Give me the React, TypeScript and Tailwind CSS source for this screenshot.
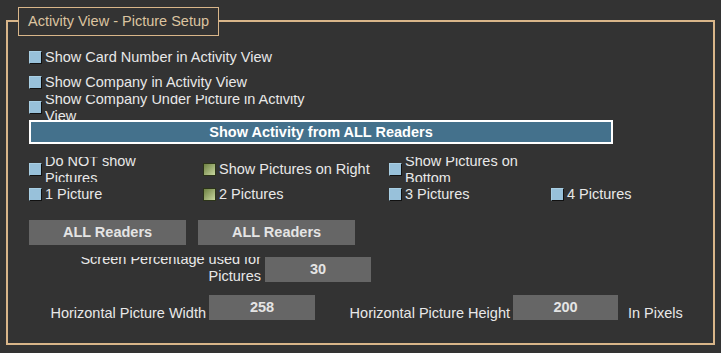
import React from "react";

const tan = "border-[#d9b68a]";

function Box({ green }: { green?: boolean }) {
  if (green) {
    return (
      <span className="block h-[13px] w-[13px] shrink-0 border border-[#2c3419] bg-linear-to-br from-[#6f8243] to-[#c8d79f]" />
    );
  }
  return (
    <span className="block h-[13px] w-[13px] shrink-0 border-t border-l border-r border-b border-t-[#a9cfe4] border-l-[#a9cfe4] border-r-[#111] border-b-[#111] bg-[#98c1da]" />
  );
}

function Check({ label, green }: { label: string; green?: boolean }) {
  return (
    <div className="flex h-full items-center gap-[3px]">
      <Box green={green} />
      <span className="whitespace-nowrap">{label}</span>
    </div>
  );
}

// two-line label that gets cut off by its box, like the WinForms one
function WrapCheck({ label, width, green }: { label: string; width: number; green?: boolean }) {
  return (
    <div className="flex h-full items-center gap-[3px]">
      <Box green={green} />
      <div className="h-[25px] overflow-hidden" style={{ width }}>
        <div className="mt-[-4px] leading-[17px]">{label}</div>
      </div>
    </div>
  );
}

function Field({ value, w }: { value: string; w: string }) {
  return (
    <div className={`flex h-[25px] items-center justify-center bg-[#666] pb-[1px] font-bold text-[#e4e4e4] ${w}`}>
      {value}
    </div>
  );
}

export default function App() {
  return (
    <div className="h-[353px] w-[721px] bg-[#333] pl-[6px] pt-[20px] font-['Liberation_Sans',Arial,sans-serif] text-[14.5px] leading-[17px] text-[#e8e8e8]">
      <div className={`relative h-[325px] w-[709px] border-2 ${tan}`}>
        <div className={`absolute left-[10px] top-[-15px] flex h-[29px] w-[201px] items-center border ${tan} bg-[#333] pl-[9px] text-[#dcc4a0]`}>
          Activity View - Picture Setup
        </div>

        <div className="flex flex-col pl-[21px]">
          <div className="mt-[26px] h-[18px]">
            <Check label="Show Card Number in Activity View" />
          </div>
          <div className="mt-[7px] h-[18px]">
            <Check label="Show Company in Activity View" />
          </div>
          <div className="mt-[4px] h-[25px]">
            <WrapCheck label="Show Company Under Picture in Activity View" width={270} />
          </div>

          <div className="flex h-[24px] w-[584px] items-center justify-center border-2 border-white bg-[#44718c] font-bold text-white">
            Show Activity from ALL Readers
          </div>

          <div className="mt-[13px] flex h-[25px]">
            <div className="w-[174px]">
              <WrapCheck label="Do NOT show Pictures" width={120} />
            </div>
            <div className="w-[186px]">
              <Check label="Show Pictures on Right" green />
            </div>
            <div className="w-[162px]">
              <WrapCheck label="Show Pictures on Bottom" width={130} />
            </div>
          </div>

          <div className="mt-[3px] flex h-[18px]">
            <div className="w-[174px]">
              <Check label="1 Picture" />
            </div>
            <div className="w-[186px]">
              <Check label="2 Pictures" green />
            </div>
            <div className="w-[162px]">
              <Check label="3 Pictures" />
            </div>
            <div>
              <Check label="4 Pictures" />
            </div>
          </div>

          <div className="mt-[17px] flex gap-[12px]">
            <div className="flex h-[25px] w-[157px] items-center justify-center bg-[#666] font-bold text-[#e4e4e4]">
              ALL Readers
            </div>
            <div className="flex h-[25px] w-[157px] items-center justify-center bg-[#666] font-bold text-[#e4e4e4]">
              ALL Readers
            </div>
          </div>

          <div className="mt-[12px] flex h-[25px] gap-[4px]">
            <div className="h-[25px] w-[232px] overflow-hidden text-right">
              <div className="ml-auto mt-[-6px] w-[200px]">Screen Percentage used for Pictures</div>
            </div>
            <Field value="30" w="w-[106px]" />
          </div>

          <div className="mt-[13px] flex h-[25px]">
            <div className="w-[177px] pt-[10px] text-right">Horizontal Picture Width</div>
            <div className="ml-[3px]">
              <Field value="258" w="w-[106px]" />
            </div>
            <div className="w-[195px] pt-[10px] text-right">Horizontal Picture Height</div>
            <div className="ml-[3px]">
              <Field value="200" w="w-[105px]" />
            </div>
            <div className="ml-[10px] pt-[10px]">In Pixels</div>
          </div>
        </div>
      </div>
    </div>
  );
}
